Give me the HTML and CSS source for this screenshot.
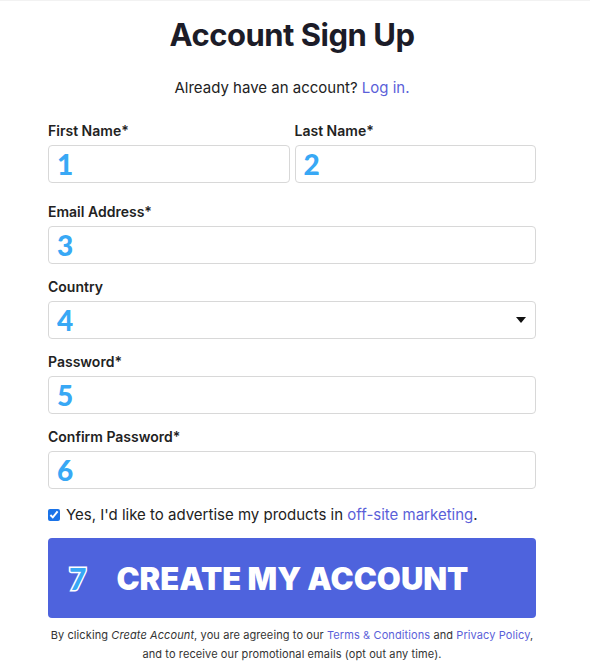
FILE: index.html
```html
<!DOCTYPE html>
<html lang="en">
<head>
  <meta charset="UTF-8">
  <meta name="viewport" content="width=device-width, initial-scale=1.0">
  <title>Account Sign Up</title>
  <link rel="stylesheet" href="styles.css">
</head>
<body>
  <div class="container">
    <h1>Account Sign Up</h1>
    <p class="login-line">Already have an account? <a href="#">Log in.</a></p>

    <form id="signupForm" class="signup-form">
      <div class="row">
        <div class="field">
          <label for="firstName">First Name*</label>
          <input type="text" id="firstName" placeholder="1">
        </div>
        <div class="field">
          <label for="lastName">Last Name*</label>
          <input type="text" id="lastName" placeholder="2">
        </div>
      </div>

      <div class="field">
        <label for="email">Email Address*</label>
        <input type="email" id="email" placeholder="3">
      </div>

      <div class="field">
        <label for="country">Country</label>
        <div class="select-wrap">
          <select id="country">
            <option>4</option>
          </select>
          <svg class="caret" width="10" height="6" viewBox="0 0 10 6">
            <path d="M0 0 L10 0 L5 6 Z" fill="#111"/>
          </svg>
        </div>
      </div>

      <div class="field">
        <label for="password">Password*</label>
        <input type="password" id="password" placeholder="5">
      </div>

      <div class="field">
        <label for="confirmPassword">Confirm Password*</label>
        <input type="password" id="confirmPassword" placeholder="6">
      </div>

      <label class="check-row">
        <input type="checkbox" checked>
        <span>Yes, I'd like to advertise my products in <a href="#">off-site marketing</a>.</span>
      </label>

      <button type="submit"><span class="step">7</span>CREATE MY ACCOUNT</button>
    </form>

    <p class="legal">
      By clicking <em>Create Account</em>, you are agreeing to our <a href="#">Terms &amp; Conditions</a> and <a href="#">Privacy Policy</a>,<br>
      and to receive our promotional emails (opt out any time).
    </p>
  </div>
</body>
</html>
```

FILE: styles.css
```css
body {
  font-family: 'Inter', 'Liberation Sans', sans-serif;
  background-color: #FFFFFF;
  color: #222;
  margin: 0;
  border-top: 1px solid #F2F2F2;
}

.container {
  width: 488px;
  margin-left: 48px;
}

h1 {
  font-size: 31px;
  font-weight: 700;
  letter-spacing: -0.5px;
  text-align: center;
  color: #1C1C28;
  margin: 16px 0 0;
  line-height: 36px;
}

.login-line {
  text-align: center;
  font-size: 15px;
  margin: 26px 0 0;
  line-height: 18px;
  color: #222;
}

a {
  color: #5B5FD9;
  text-decoration: none;
}

.signup-form {
  display: flex;
  flex-direction: column;
  margin-top: 25px;
}

.row {
  display: flex;
  gap: 5px;
  margin-bottom: 6px;
}

.row .field {
  flex: 1;
}

.field {
  display: flex;
  flex-direction: column;
  margin-bottom: 14px;
}

.field label {
  font-size: 14px;
  font-weight: 600;
  line-height: 17px;
  color: #222;
  margin-bottom: 6px;
}

.field input,
.field select {
  height: 38px;
  box-sizing: border-box;
  border: 1px solid #D8D8D8;
  border-radius: 4px;
  padding: 0 8px;
  font-family: 'Lato', sans-serif;
  font-size: 28px;
  font-weight: 900;
  color: #38A8F5;
  background-color: #FFFFFF;
  width: 100%;
}

.field input::placeholder {
  color: #38A8F5;
  opacity: 1;
}

.select-wrap {
  position: relative;
}

.field select {
  appearance: none;
  -webkit-appearance: none;
}

.caret {
  position: absolute;
  right: 10px;
  top: 16px;
}

.check-row {
  display: flex;
  align-items: center;
  gap: 6px;
  font-size: 15px;
  line-height: 18px;
  margin: 3px 0 14px;
  color: #222;
}

.check-row input {
  width: 12px;
  height: 12px;
  margin: 0;
  accent-color: #1A73E8;
}

button {
  height: 80px;
  border: none;
  border-radius: 4px;
  background-color: #4E63DD;
  color: #FFFFFF;
  font-family: 'Inter', sans-serif;
  font-size: 31px;
  font-weight: 900;
  text-align: left;
  padding: 0 0 0 21px;
  cursor: pointer;
  display: flex;
  align-items: center;
}

.step {
  font-family: 'Lato', sans-serif;
  font-size: 30px;
  font-weight: 900;
  color: #38A8F5;
  -webkit-text-stroke: 3px #FFFFFF;
  paint-order: stroke fill;
  margin-right: 30px;
}

.legal {
  text-align: center;
  font-size: 11px;
  letter-spacing: 0.1px;
  line-height: 19px;
  margin: 8px 0 0;
  color: #333;
}
```
